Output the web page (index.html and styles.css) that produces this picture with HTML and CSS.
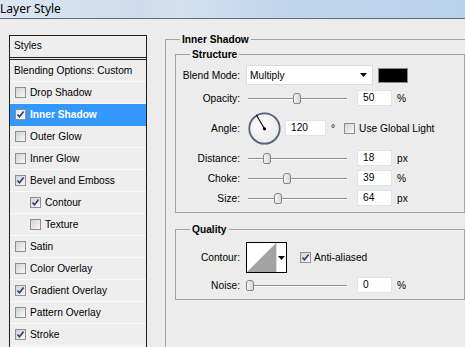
FILE: index.html
```html
<!DOCTYPE html>
<html lang="en">
<head>
  <meta charset="UTF-8" />
  <title>Layer Style</title>
  <link rel="stylesheet" href="styles.css">
</head>
<body>

  <div class="titlebar">Layer Style</div>

  <div class="dialog">
    <!-- Styles list -->
    <div class="side">
      <div class="styles-list">
        <div class="list-head">Styles</div>
        <div class="item plain">Blending Options: Custom</div>
        <div class="item"><span class="check"></span>Drop Shadow</div>
        <div class="item selected"><span class="check on"><svg viewBox="0 0 9 9"><path d="M1.5 4.5 L3.5 6.8 L7.6 1.6"/></svg></span>Inner Shadow</div>
        <div class="item"><span class="check"></span>Outer Glow</div>
        <div class="item"><span class="check"></span>Inner Glow</div>
        <div class="item"><span class="check on"><svg viewBox="0 0 9 9"><path d="M1.5 4.5 L3.5 6.8 L7.6 1.6"/></svg></span>Bevel and Emboss</div>
        <div class="item sub"><span class="check on"><svg viewBox="0 0 9 9"><path d="M1.5 4.5 L3.5 6.8 L7.6 1.6"/></svg></span>Contour</div>
        <div class="item sub"><span class="check"></span>Texture</div>
        <div class="item"><span class="check"></span>Satin</div>
        <div class="item"><span class="check"></span>Color Overlay</div>
        <div class="item"><span class="check on"><svg viewBox="0 0 9 9"><path d="M1.5 4.5 L3.5 6.8 L7.6 1.6"/></svg></span>Gradient Overlay</div>
        <div class="item"><span class="check"></span>Pattern Overlay</div>
        <div class="item"><span class="check on"><svg viewBox="0 0 9 9"><path d="M1.5 4.5 L3.5 6.8 L7.6 1.6"/></svg></span>Stroke</div>
      </div>
    </div>

    <!-- Inner Shadow settings -->
    <div class="main">
      <fieldset class="outer">
        <legend>Inner Shadow</legend>

        <fieldset class="section structure">
          <legend>Structure</legend>

          <div class="row blend gap">
            <span class="label">Blend Mode:</span>
            <div class="select">
              <span>Multiply</span>
              <svg class="arrow" viewBox="0 0 7 4"><polygon points="0,0 7,0 3.5,4"/></svg>
            </div>
            <div class="swatch"></div>
          </div>

          <div class="row gap">
            <span class="label">Opacity:</span>
            <div class="slider"><span class="thumb" style="left:51px"></span></div>
            <span class="value">50</span>
            <span class="unit">%</span>
          </div>

          <div class="row angle gap">
            <span class="label">Angle:</span>
            <svg class="dial" viewBox="0 0 33 33">
              <defs>
                <radialGradient id="dialFill" cx="40%" cy="35%" r="70%">
                  <stop offset="0" stop-color="#ffffff"/>
                  <stop offset="1" stop-color="#e6e6e6"/>
                </radialGradient>
              </defs>
              <circle cx="16.5" cy="16.5" r="15.2" fill="url(#dialFill)" stroke="#55607a" stroke-width="1.8"/>
              <line x1="16.5" y1="16.8" x2="8.2" y2="2.8" stroke="#000" stroke-width="1.1"/>
              <circle cx="16.5" cy="16.8" r="1.6" fill="#000"/>
            </svg>
            <span class="value wide">120</span>
            <span class="deg">°</span>
            <span class="check global"></span>
            <span>Use Global Light</span>
          </div>

          <div class="row">
            <span class="label">Distance:</span>
            <div class="slider"><span class="thumb" style="left:21px"></span></div>
            <span class="value">18</span>
            <span class="unit">px</span>
          </div>

          <div class="row">
            <span class="label">Choke:</span>
            <div class="slider"><span class="thumb" style="left:41px"></span></div>
            <span class="value">39</span>
            <span class="unit">%</span>
          </div>

          <div class="row">
            <span class="label">Size:</span>
            <div class="slider"><span class="thumb" style="left:32px"></span></div>
            <span class="value">64</span>
            <span class="unit">px</span>
          </div>
        </fieldset>

        <fieldset class="section quality">
          <legend>Quality</legend>

          <div class="row contour-row gap">
            <span class="label">Contour:</span>
            <div class="contour">
              <svg class="curve" viewBox="0 0 29 29"><polygon points="0,29 29,0 29,29"/></svg>
              <span class="contour-drop">
                <svg class="arrow" viewBox="0 0 7 4"><polygon points="0,0 7,0 3.5,4"/></svg>
              </span>
            </div>
            <span class="check on aa"><svg viewBox="0 0 9 9"><path d="M1.5 4.5 L3.5 6.8 L7.6 1.6"/></svg></span>
            <span>Anti-aliased</span>
          </div>

          <div class="row">
            <span class="label">Noise:</span>
            <div class="slider"><span class="thumb" style="left:4px"></span></div>
            <span class="value">0</span>
            <span class="unit">%</span>
          </div>
        </fieldset>
      </fieldset>
    </div>
  </div>

</body>
</html>
```

FILE: styles.css
```css
body {
  margin: 0;
  width: 465px;
  height: 347px;
  overflow: hidden;
  background: #ececec;
  font-family: "Liberation Sans", Arial, sans-serif;
  font-size: 10.2px;
  color: #000;
}

.titlebar {
  height: 18px;
  line-height: 17px;
  font-family: "Noto Sans", "Open Sans", sans-serif;
  font-size: 12px;
  white-space: nowrap;
  background: linear-gradient(90deg, #dbe6f1 0%, #cddcec 30%, #d3e1ef 38%, #c1d6ec 60%, #b9d1ea 100%);
  border-bottom: 1px solid #5f6b78;
}

.dialog {
  display: flex;
}

/* left column */
.side {
  flex: none;
  padding: 16px 0 0 9px;
}

.styles-list {
  width: 138px;
  height: 312px;
  box-sizing: border-box;
  border: 1px solid #1f1f1f;
  border-bottom: none;
  background: #eeeeee;
  overflow: hidden;
}

.list-head {
  height: 21px;
  line-height: 20px;
  padding-left: 4px;
  border-bottom: 3px double #1f1f1f;
}

.item {
  display: flex;
  align-items: center;
  height: 21px;
  padding-left: 5px;
  white-space: nowrap;
  border-bottom: 1px solid #fafafa;
}

.item.plain {
  padding-left: 4px;
}

.item.sub {
  padding-left: 20px;
}

.item.selected {
  background: #3399ff;
  color: #fff;
  font-weight: bold;
  border-bottom-color: #3399ff;
}

.check {
  flex: none;
  display: inline-flex;
  align-items: center;
  justify-content: center;
  width: 11px;
  height: 11px;
  box-sizing: border-box;
  margin-right: 4px;
  border: 1px solid #8e8f8f;
  background: linear-gradient(135deg, #d2d2d2, #f8f8f8);
}

.item.selected .check {
  background: linear-gradient(135deg, #e4e4e4, #ffffff);
}

.check svg {
  width: 9px;
  height: 9px;
}

.check path {
  fill: none;
  stroke: #2a3f78;
  stroke-width: 1.6;
}

/* right column */
.main {
  flex: 1;
  padding-left: 18px;
}

fieldset {
  margin: 0;
  padding: 0;
  min-width: 0;
  border: 1px solid #a2a2a2;
}

legend {
  padding: 0 2px;
  font-weight: bold;
  line-height: 13px;
}

.outer {
  margin-top: 14px;
  width: 300px;
  height: 314px;
  box-sizing: border-box;
  padding-left: 9px;
  border-right: none;
  border-bottom: none;
}

.outer > legend {
  margin-left: 5px;
}

.section {
  width: 290px;
  box-sizing: border-box;
}

.section > legend {
  margin-left: 14px;
}

.structure {
  margin-top: 2px;
  padding: 3px 0 4px;
}

.quality {
  margin-top: 10px;
  padding: 6px 0 4px;
}

.row {
  display: flex;
  align-items: center;
  height: 20px;
  white-space: nowrap;
}

.row.gap {
  margin-bottom: 2px;
}

.row.blend {
  height: 22px;
}

.row.angle {
  height: 36px;
}

.row.contour-row {
  height: 31px;
}

.label {
  flex: none;
  width: 64px;
  margin-right: 6px;
  text-align: right;
}

.select {
  flex: none;
  display: flex;
  align-items: center;
  justify-content: space-between;
  width: 127px;
  height: 20px;
  box-sizing: border-box;
  padding: 0 5px 0 3px;
  background: #fff;
  border: 1px solid #dcdcdc;
}

.arrow {
  width: 7px;
  height: 4px;
  fill: #000;
}

.swatch {
  width: 30px;
  height: 15px;
  margin-left: 5px;
  box-sizing: border-box;
  background: #000;
  border: 1px solid #8a8a8a;
}

.slider {
  position: relative;
  flex: none;
  width: 106px;
  height: 20px;
  margin-right: 5px;
}

.slider::before {
  content: "";
  position: absolute;
  left: 2px;
  right: 5px;
  top: 10px;
  height: 1px;
  background: #8f8f8f;
  border-bottom: 1px solid #fdfdfd;
}

.thumb {
  position: absolute;
  top: 5px;
  width: 8px;
  height: 11px;
  margin-left: -4px;
  box-sizing: border-box;
  border: 1px solid #858585;
  border-radius: 3px 3px 2px 2px;
  background: linear-gradient(90deg, #f4f4f4, #d6d6d6);
}

.value {
  flex: none;
  width: 35px;
  height: 16px;
  line-height: 14px;
  box-sizing: border-box;
  padding-left: 5px;
  margin-right: 5px;
  background: #fff;
  border: 1px solid #e2e2e2;
}

.value.wide {
  width: 41px;
  margin-right: 0;
}

.dial {
  flex: none;
  width: 33px;
  height: 33px;
  margin: 0 4px 0 2px;
}

.deg {
  margin-left: 5px;
}

.check.global {
  margin-left: 9px;
  margin-right: 4px;
}

.contour {
  flex: none;
  display: flex;
  width: 41px;
  height: 31px;
  box-sizing: border-box;
  border: 1px solid #000;
  background: #fff;
}

.curve {
  width: 29px;
  height: 29px;
  fill: #a3a3a3;
}

.contour-drop {
  flex: 1;
  display: flex;
  align-items: center;
  justify-content: center;
  border-left: 1px solid #e0e0e0;
}

.check.aa {
  margin-left: 13px;
  margin-right: 3px;
}
```
